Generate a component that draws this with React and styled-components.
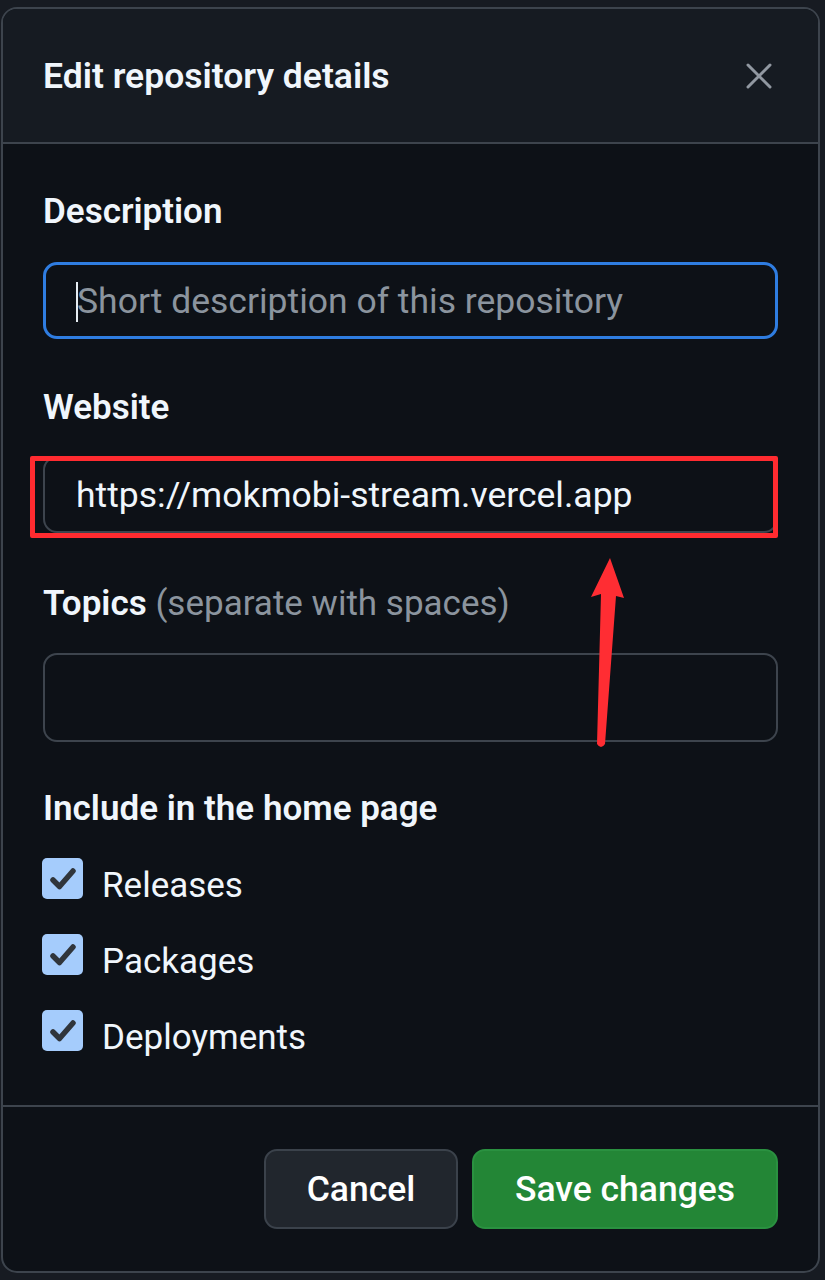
import React from "react";
import styled, { createGlobalStyle } from "styled-components";

const GlobalStyle = createGlobalStyle`
  html, body {
    margin: 0;
    padding: 0;
    background: #171b22;
  }
  body {
    font-family: Roboto, "Noto Sans", "Liberation Sans", sans-serif;
    color: #f0f6fc;
  }
  * { box-sizing: border-box; }
`;

const Page = styled.div`
  width: 825px;
  height: 1280px;
  padding: 7px 5px 0 1px;
  overflow: hidden;
`;

const Dialog = styled.div`
  position: relative;
  width: 819px;
  height: 1266px;
  display: flex;
  flex-direction: column;
  background: #0d1117;
  border: 2px solid #3d444d;
  border-radius: 16px;
  overflow: hidden;
`;

const Header = styled.header`
  height: 135px;
  flex: none;
  display: flex;
  align-items: center;
  justify-content: space-between;
  padding: 0 40px 0 40px;
  background: #161b22;
  border-bottom: 2px solid #3d444d;
`;

const Title = styled.h1`
  margin: 0;
  font-size: 35.5px;
  font-weight: 600;
  color: #f0f6fc;
`;

const CloseButton = styled.button`
  width: 40px;
  height: 40px;
  padding: 0;
  margin-right: -1px;
  border: none;
  background: none;
  display: flex;
  align-items: center;
  justify-content: center;
`;

const Body = styled.div`
  flex: 1;
  padding: 48px 40px 0 40px;
  display: flex;
  flex-direction: column;
`;

const Label = styled.div`
  margin-top: ${p => p.top || 0}px;
  font-size: 35px;
  line-height: 40px;
  font-weight: 600;
  color: #f0f6fc;
`;

const Hint = styled.span`
  font-weight: 400;
  color: #8b949e;
`;

const Field = styled.div`
  position: relative;
  margin-top: ${p => p.top}px;
  height: ${p => p.h}px;
  display: flex;
  align-items: center;
  padding-left: 31px;
  border: ${p => (p.focused ? "3px solid #2f7de1" : "2px solid #3d444d")};
  border-radius: 14px;
  background: #0d1117;
  font-size: 35.5px;
  color: #f0f6fc;
`;

const Placeholder = styled.span`
  position: relative;
  color: #8b949e;
  &::before {
    content: "";
    position: absolute;
    left: -1px;
    top: 2px;
    width: 2px;
    height: 40px;
    background: #e6edf3;
  }
`;

const Highlight = styled.div`
  position: absolute;
  left: -15px;
  top: -2px;
  right: -2px;
  bottom: -7px;
  border: 5px solid #ff2b30;
  border-radius: 2px;
  pointer-events: none;
`;

const Arrow = styled.svg`
  position: absolute;
  left: 580px;
  top: 540px;
  pointer-events: none;
`;

const Checks = styled.div`
  margin-top: 29px;
  display: flex;
  flex-direction: column;
  gap: 20px;
`;

const CheckRow = styled.label`
  display: flex;
  align-items: flex-start;
  gap: 19px;
  height: 56px;
  margin-left: -1px;
`;

const Box = styled.span`
  width: 41px;
  height: 41px;
  flex: none;
  border-radius: 5px;
  background: #a5ccfc;
  display: flex;
  align-items: center;
  justify-content: center;
`;

const CheckText = styled.span`
  font-size: 35px;
  line-height: 56px;
  color: #f0f6fc;
`;

const Footer = styled.footer`
  height: 166px;
  flex: none;
  display: flex;
  align-items: center;
  justify-content: flex-end;
  gap: 14px;
  padding: 0 40px;
  border-top: 2px solid #3d444d;
`;

const Button = styled.button`
  height: 80px;
  width: ${p => p.w}px;
  border-radius: 13px;
  border: 2px solid ${p => (p.primary ? "#2a9140" : "#3b424b")};
  background: ${p => (p.primary ? "#238636" : "#21262d")};
  color: #ffffff;
  font-family: Roboto, "Noto Sans", sans-serif;
  font-size: 35.5px;
  font-weight: 500;
`;

const items = ["Releases", "Packages", "Deployments"];

export default function App() {
  return (
    <Page>
      <GlobalStyle />
      <Dialog>
        <Header>
          <Title>Edit repository details</Title>
          <CloseButton aria-label="Close">
            <svg width="26" height="26" viewBox="0 0 26 26">
              <path d="M2 2 L24 24 M24 2 L2 24" stroke="#9198a1" strokeWidth="3" strokeLinecap="round" />
            </svg>
          </CloseButton>
        </Header>
        <Body>
          <Label>Description</Label>
          <Field top={30} h={77} focused>
            <Placeholder>Short description of this repository</Placeholder>
          </Field>

          <Label top={49}>Website</Label>
          <Field top={28} h={77}>
            https://mokmobi-stream.vercel.app
            <Highlight />
          </Field>

          <Label top={51}>
            Topics <Hint>(separate with spaces)</Hint>
          </Label>
          <Field top={29} h={89} />

          <Label top={47}>Include in the home page</Label>
          <Checks>
            {items.map(item => (
              <CheckRow key={item}>
                <Box>
                  <svg width="30" height="30" viewBox="0 0 30 30">
                    <path d="M5 16 L11.5 22.5 L25 7" fill="none" stroke="#30353b" strokeWidth="5.5" strokeLinecap="round" strokeLinejoin="round" />
                  </svg>
                </Box>
                <CheckText>{item}</CheckText>
              </CheckRow>
            ))}
          </Checks>
        </Body>
        <Footer>
          <Button w={194}>Cancel</Button>
          <Button primary w={306}>Save changes</Button>
        </Footer>
        <Arrow width="50" height="210" viewBox="580 547 50 210">
          <path
            d="M607 556 L621 596 L613 594 L602 742 Q598 748 594 742 L598 592 L588 595 Z"
            fill="#ff2d33"
          />
        </Arrow>
      </Dialog>
    </Page>
  );
}
